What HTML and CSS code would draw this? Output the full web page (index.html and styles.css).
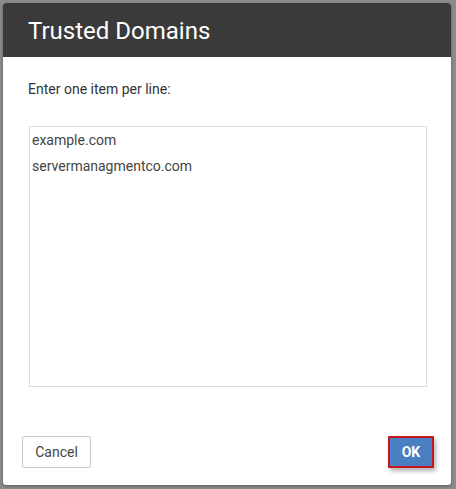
FILE: index.html
```html
<!DOCTYPE html>
<html lang="en-US">
<head>
   <meta charset="UTF-8">
   <title>Trusted Domains</title>
   <link rel="stylesheet" href="styles.css">
</head>
<body>
   <div id="dialog">
      <header id="dialog-header">
         <h1>Trusted Domains</h1>
      </header>
      <div id="dialog-body">
         <p class="hint">Enter one item per line:</p>
         <textarea id="domain-list" spellcheck="false">example.com
servermanagmentco.com</textarea>
      </div>
      <footer id="dialog-footer">
         <button id="cancel-btn">Cancel</button>
         <button id="ok-btn">OK</button>
      </footer>
   </div>
</body>
</html>
```

FILE: styles.css
```css
* {
   font-family: Roboto, "Liberation Sans", sans-serif;
   box-sizing: border-box;
}
html {
   height: 100%;
}
body {
   margin: 0;
   padding: 3px 5px 4px 3px;
   background: #8b8b8b;
   height: 100%;
}
#dialog {
   display: flex;
   flex-direction: column;
   height: 482px;
   background: #fff;
   border-radius: 3px;
   overflow: hidden;
   box-shadow: 0 1px 3px rgba(0, 0, 0, 0.4);
}
#dialog-header {
   height: 54px;
   background: #3a3a3a;
   display: flex;
   align-items: center;
   padding-left: 25px;
}
h1 {
   margin: 0;
   color: #fff;
   font-size: 24px;
   font-weight: 400;
   padding-top: 2px;
}
#dialog-body {
   flex: 1;
   padding: 22px 23px 0 25px;
}
.hint {
   margin: 0;
   font-size: 14px;
   line-height: 20px;
   color: #333;
}
#domain-list {
   display: block;
   margin: 27px 0 0 1px;
   width: 398px;
   height: 261px;
   border: 1px solid #ddd;
   padding: 0 2px;
   font-size: 14px;
   line-height: 26px;
   color: #444;
   resize: none;
   outline: none;
}
#dialog-footer {
   display: flex;
   justify-content: space-between;
   align-items: center;
   padding: 0 17px 17px 19px;
}
button {
   height: 32px;
   font-size: 14px;
   border-radius: 2px;
   cursor: pointer;
}
#cancel-btn {
   width: 69px;
   background: #fff;
   color: #444;
   border: 1px solid #c8c8c8;
}
#ok-btn {
   width: 46px;
   background: #4a7fc1;
   color: #fff;
   font-weight: 700;
   border: 2px solid #c4161c;
   border-radius: 1px;
   box-shadow: 2px 3px 4px rgba(0, 0, 0, 0.3);
}
```
